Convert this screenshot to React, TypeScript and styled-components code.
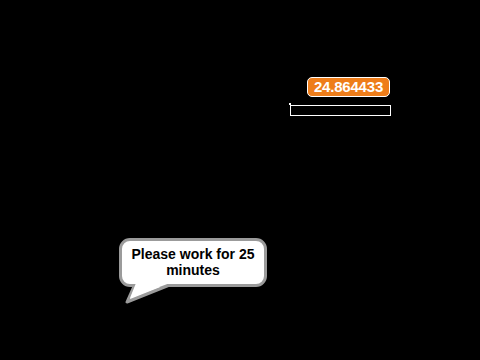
import React from "react";
import styled, { createGlobalStyle } from "styled-components";

const GlobalStyle = createGlobalStyle`
    html, body {
        margin: 0;
        padding: 0;
        background: #000;
    }
`

const Stage = styled.div`
    position: relative;
    width: 480px;
    height: 360px;
    background: #000;
    overflow: hidden;
    font-family: "Liberation Sans", Arial, sans-serif;
`

// readout and its slider, stacked and right-aligned
const Watcher = styled.div`
    position: absolute;
    left: 289px;
    top: 77px;
    width: 102px;
    display: flex;
    flex-direction: column;
    align-items: flex-end;
    gap: 6px;
`

const Monitor = styled.div`
    width: 83px;
    height: 20px;
    margin-right: 1px;
    box-sizing: border-box;
    border: 1px solid #fff;
    border-radius: 5px;
    background: #ee7d1a;
    color: #fff;
    font-weight: bold;
    font-size: 15px;
    line-height: 18px;
    text-align: center;
    letter-spacing: -0.2px;
`

const Slot = styled.div`
    position: relative;
    width: 101px;
    height: 11px;
    margin-top: 2px;
    box-sizing: border-box;
    border: 1px solid #fff;
    background: #000;

    &::before {
        content: "";
        position: absolute;
        left: -2px;
        top: -3px;
        width: 2px;
        height: 2px;
        background: #fff;
    }
`

const Bubble = styled.div`
    position: absolute;
    left: 119px;
    top: 238px;
    width: 148px;
    height: 49px;
    box-sizing: border-box;
    border: 3px solid #9b9b9b;
    border-radius: 11px;
    background: #fff;
    color: #000;
    font-weight: bold;
    font-size: 14px;
    line-height: 16px;
    text-align: center;
    padding-top: 5px;
`

const Tail = styled.svg`
    position: absolute;
    left: 120px;
    top: 281px;
    overflow: visible;
`

const App = (): JSX.Element => {
    return (
        <>
            <GlobalStyle />
            <Stage>
                <Watcher>
                    <Monitor>24.864433</Monitor>
                    <Slot />
                </Watcher>
                <Tail width="60" height="25">
                    <polygon points="15,3 7,21 52,3" fill="#fff" stroke="#9b9b9b" strokeWidth="3" strokeLinejoin="round" />
                </Tail>
                <Bubble>Please work for 25<br />minutes</Bubble>
                <Tail width="60" height="25">
                    <polygon points="16,2 10,17 50,2" fill="#fff" />
                </Tail>
            </Stage>
        </>
    )
}

export default App;
